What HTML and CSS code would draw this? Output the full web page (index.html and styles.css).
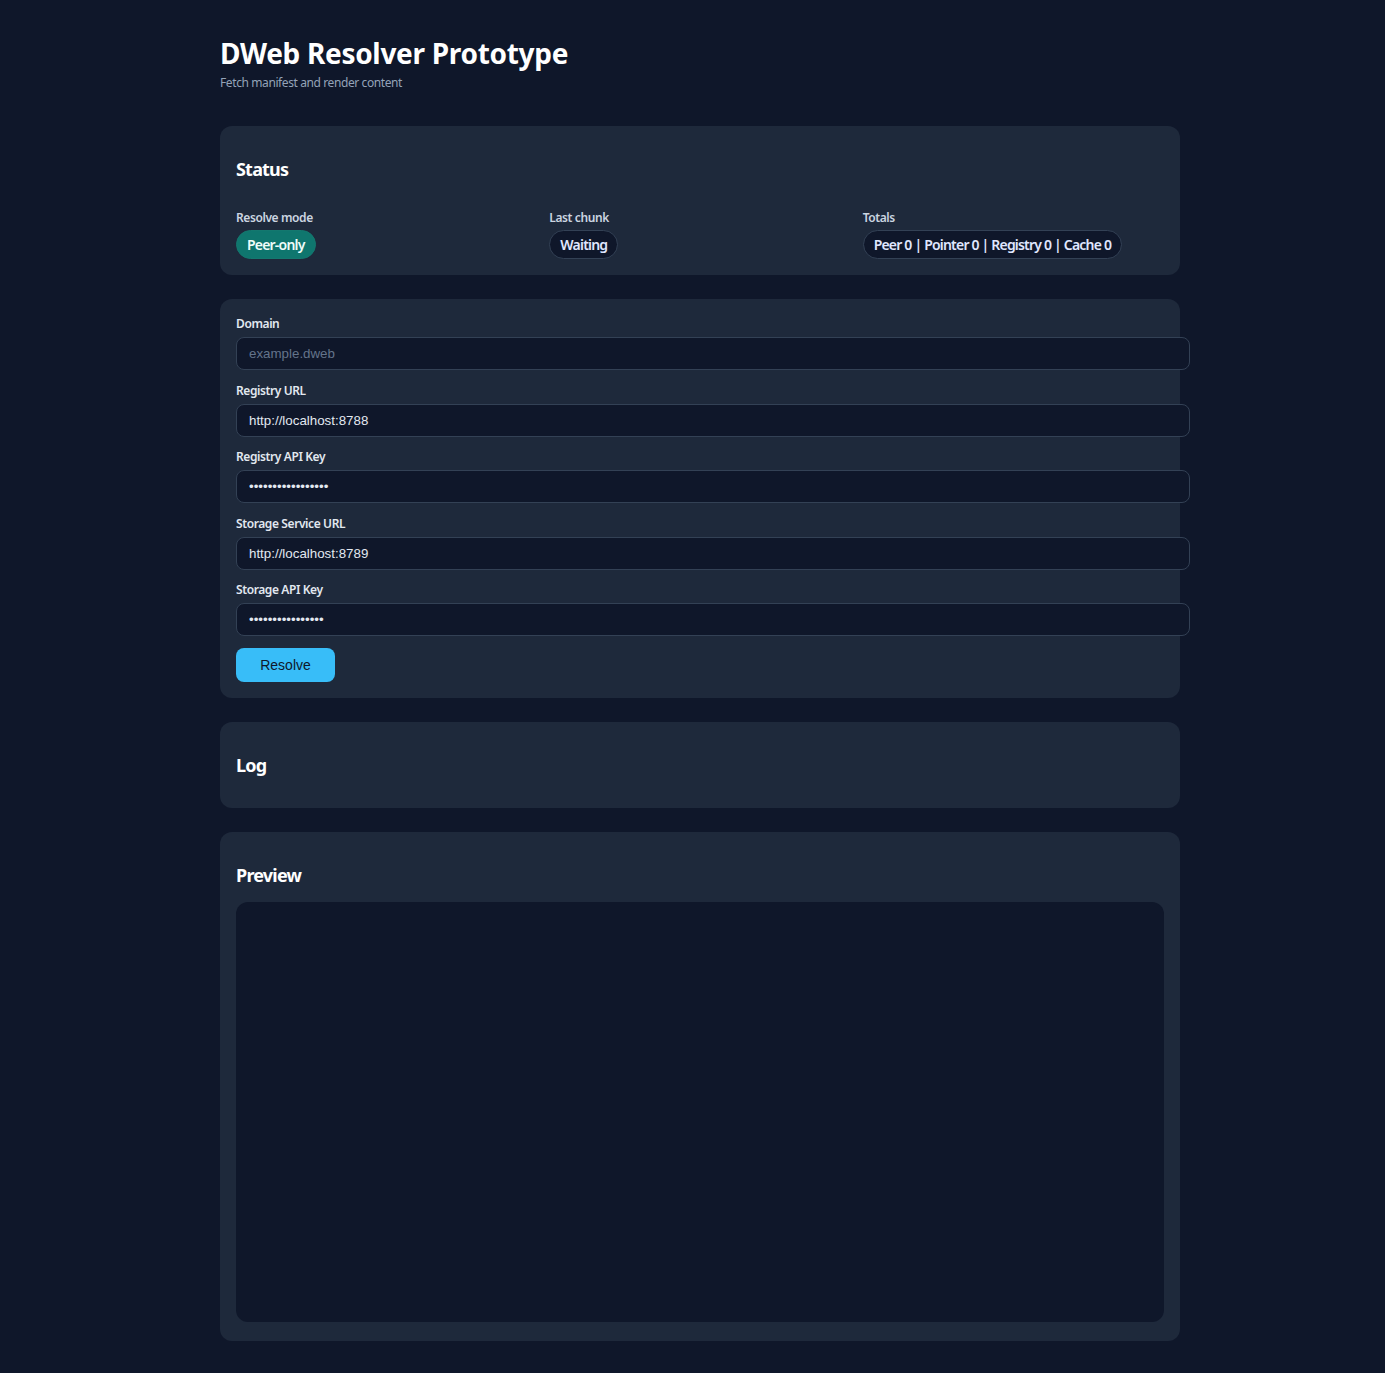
FILE: index.html
```html
<!DOCTYPE html>
<html lang="en">
<head>
<meta charset="utf-8">
<title>DWeb Resolver Prototype</title>
<link rel="stylesheet" href="styles.css">
</head>
<body>
<main class="page">
  <header class="header">
    <h1 class="title">DWeb Resolver Prototype</h1>
    <p class="subtitle">Fetch manifest and render content</p>
  </header>

  <section class="card">
    <h2 class="card-title">Status</h2>
    <div class="status-grid">
      <div class="status-item">
        <span class="status-label">Resolve mode</span>
        <span class="pill pill-teal">Peer-only</span>
      </div>
      <div class="status-item">
        <span class="status-label">Last chunk</span>
        <span class="pill">Waiting</span>
      </div>
      <div class="status-item">
        <span class="status-label">Totals</span>
        <span class="pill">Peer 0 | Pointer 0 | Registry 0 | Cache 0</span>
      </div>
    </div>
  </section>

  <section class="card form-card">
    <div class="field">
      <label class="field-label" for="domain">Domain</label>
      <input class="input" id="domain" type="text" placeholder="example.dweb">
    </div>
    <div class="field">
      <label class="field-label" for="reg">Registry URL</label>
      <input class="input" id="reg" type="text" value="http://localhost:8788">
    </div>
    <div class="field">
      <label class="field-label" for="regkey">Registry API Key</label>
      <input class="input" id="regkey" type="password" value="abcdefghijklmnopq">
    </div>
    <div class="field">
      <label class="field-label" for="store">Storage Service URL</label>
      <input class="input" id="store" type="text" value="http://localhost:8789">
    </div>
    <div class="field">
      <label class="field-label" for="storekey">Storage API Key</label>
      <input class="input" id="storekey" type="password" value="abcdefghijklmnop">
    </div>
    <div class="actions">
      <button class="btn" type="button">Resolve</button>
    </div>
  </section>

  <section class="card">
    <h2 class="card-title">Log</h2>
  </section>

  <section class="card preview-card">
    <h2 class="card-title">Preview</h2>
    <div class="preview-box"></div>
  </section>
</main>
</body>
</html>
```

FILE: styles.css
```css
html, body {
  margin: 0;
  background: #0f172a;
}
body {
  padding: 0 0 0 15px;
  font-family: "Noto Sans", "Open Sans", sans-serif;
  color: #e2e8f0;
}
.page {
  width: 960px;
  margin: 0 auto;
  padding: 36px 0 32px;
}
.header {
  margin-bottom: 35px;
}
.title {
  margin: 0;
  font-size: 28px;
  line-height: 34px;
  font-weight: 700;
  color: #ffffff;
  letter-spacing: -0.3px;
}
.subtitle {
  margin: 5px 0 0;
  font-size: 12px;
  line-height: 16px;
  color: #94a3b8;
  letter-spacing: -0.4px;
}
.card {
  background: #1e293b;
  border-radius: 12px;
  padding: 16px;
  margin-bottom: 24px;
}
.card-title {
  margin: 16px 0;
  font-size: 18px;
  line-height: 22px;
  font-weight: 700;
  color: #ffffff;
  letter-spacing: -0.8px;
}
.status-grid {
  display: grid;
  grid-template-columns: repeat(3, 1fr);
  gap: 12px;
  margin-top: 30px;
}
.status-item {
  display: flex;
  flex-direction: column;
  align-items: flex-start;
  gap: 4px;
}
.status-label {
  font-size: 12px;
  line-height: 16px;
  font-weight: 600;
  color: #cbd5e1;
  letter-spacing: -0.4px;
}
.pill {
  display: inline-block;
  padding: 5px 10px;
  border-radius: 999px;
  border: 1px solid #334155;
  background: #0f172a;
  color: #e0e7ff;
  font-size: 14px;
  line-height: 17px;
  font-weight: 600;
  letter-spacing: -0.8px;
}
.pill-teal {
  background: #0f766e;
  border-color: #14786f;
  color: #f0fdfa;
}
.form-card {
  display: flex;
  flex-direction: column;
  gap: 11.5px;
}
.field {
  display: flex;
  flex-direction: column;
  gap: 4px;
}
.field-label {
  font-size: 12px;
  line-height: 18px;
  font-weight: 600;
  color: #e2e8f0;
  letter-spacing: -0.4px;
}
.input {
  width: 100%;
  box-sizing: content-box;
  margin: 0;
  padding: 8px 12px;
  line-height: 15px;
  height: 15px;
  font-family: "Liberation Sans", Arial, sans-serif;
  font-size: 13.333px;
  color: #e2e8f0;
  background: #0f172a;
  border: 1px solid #334155;
  border-radius: 8px;
  outline: none;
}
.input::placeholder {
  color: #64748b;
}
.actions {
  padding-top: 0.5px;
}
.btn {
  width: 99px;
  height: 34px;
  border: none;
  border-radius: 8px;
  background: #38bdf8;
  color: #0f172a;
  font-family: "Liberation Sans", Arial, sans-serif;
  font-size: 14px;
  font-weight: 500;
  cursor: pointer;
}
.preview-card {
  padding-bottom: 19px;
}
.preview-box {
  height: 420px;
  background: #0f172a;
  border-radius: 12px;
}
```
